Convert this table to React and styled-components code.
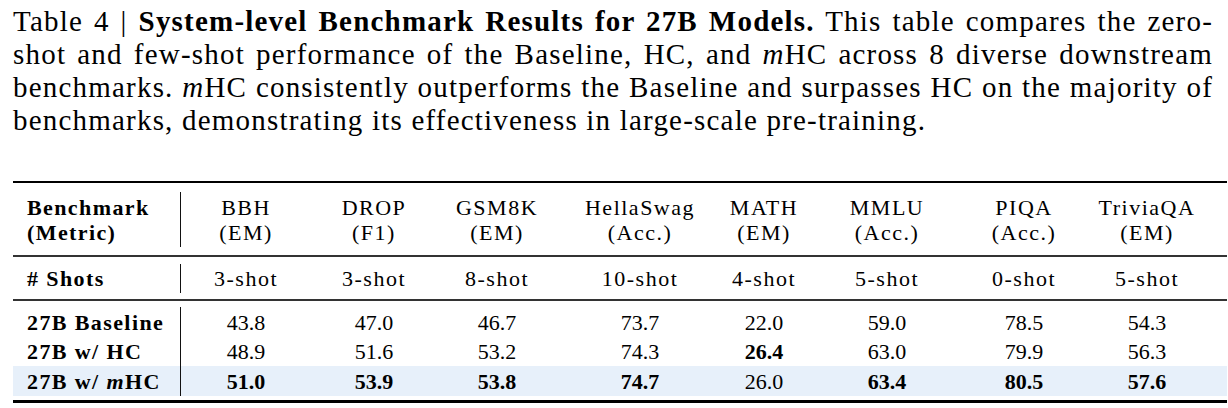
import React from 'react';
import styled, { createGlobalStyle } from 'styled-components';

const GlobalStyle = createGlobalStyle`
    html, body {
        margin: 0;
        padding: 0;
        background: #ffffff;
    }
    body {
        font-family: "Liberation Serif", "Times New Roman", serif;
        color: #000000;
    }
`;

const CELL_W = 112;

const Page = styled.div`
    width: 1228px;
    height: 408px;
    box-sizing: border-box;
    padding: 5px 1px 0 13px;
    overflow: hidden;
`;

const Caption = styled.div`
    width: 1200px;
    font-size: 29px;
    line-height: 33px;
    letter-spacing: 1.2px;
`;

const CaptionLine = styled.div`
    white-space: nowrap;
    text-align: ${(p) => (p.$last ? 'left' : 'justify')};
    text-align-last: ${(p) => (p.$last ? 'left' : 'justify')};
`;

const Strong = styled.b`
    font-weight: 700;
`;

const Em = styled.i`
    font-style: italic;
`;

const Table = styled.div`
    width: 1214px;
    margin-top: 44px;
    font-size: 22px;
`;

const Rule = styled.div`
    height: ${(p) => p.$size}px;
    background: ${(p) => p.$color || '#000'};
`;

const Section = styled.div`
    padding-top: ${(p) => p.$top}px;
    padding-bottom: ${(p) => p.$bottom}px;
`;

const Row = styled.div`
    display: flex;
    height: ${(p) => p.$h}px;
    background: ${(p) => (p.$highlight ? '#e7f0fa' : 'transparent')};
`;

const LabelCell = styled.div`
    flex: none;
    width: 168px;
    box-sizing: border-box;
    padding-left: 14px;
    border-right: 1px solid #111;
    display: flex;
    flex-direction: column;
    justify-content: center;
    font-weight: 700;
    letter-spacing: 1.4px;
    line-height: 25px;
    white-space: nowrap;
`;

const ValueCell = styled.div`
    flex: none;
    width: ${CELL_W}px;
    margin-left: ${(p) => p.$ml}px;
    display: flex;
    flex-direction: column;
    justify-content: center;
    text-align: center;
    white-space: nowrap;
    line-height: 25px;
    font-weight: ${(p) => (p.$bold ? 700 : 400)};
    letter-spacing: ${(p) => (p.$num ? 0 : 1.5)}px;
`;

const HeadRow = styled(Row)`
    padding-bottom: 3px;
    box-sizing: border-box;
`;

const COLS = [
    { name: 'BBH', metric: '(EM)', shots: '3-shot', c: 246 },
    { name: 'DROP', metric: '(F1)', shots: '3-shot', c: 374 },
    { name: 'GSM8K', metric: '(EM)', shots: '8-shot', c: 497 },
    { name: 'HellaSwag', metric: '(Acc.)', shots: '10-shot', c: 640 },
    { name: 'MATH', metric: '(EM)', shots: '4-shot', c: 764 },
    { name: 'MMLU', metric: '(Acc.)', shots: '5-shot', c: 887 },
    { name: 'PIQA', metric: '(Acc.)', shots: '0-shot', c: 1024 },
    { name: 'TriviaQA', metric: '(EM)', shots: '5-shot', c: 1147 },
];

// margin before each column so its text centres on c (table starts at x=13)
const margins = COLS.map((col, i) => {
    const left = col.c - 13 - CELL_W / 2;
    const prevRight = i === 0 ? 168 : COLS[i - 1].c - 13 + CELL_W / 2;
    return left - prevRight;
});

const ROWS = [
    {
        label: '27B Baseline',
        h: 30,
        values: ['43.8', '47.0', '46.7', '73.7', '22.0', '59.0', '78.5', '54.3'],
        bold: [],
    },
    {
        label: '27B w/ HC',
        h: 29,
        values: ['48.9', '51.6', '53.2', '74.3', '26.4', '63.0', '79.9', '56.3'],
        bold: [4],
    },
    {
        label: (
            <span>
                27B w/ <Em>m</Em>HC
            </span>
        ),
        h: 30,
        highlight: true,
        values: ['51.0', '53.9', '53.8', '74.7', '26.0', '63.4', '80.5', '57.6'],
        bold: [0, 1, 2, 3, 5, 6, 7],
    },
];

const App = () => {
    return (
        <Page>
            <GlobalStyle />
            <Caption>
                <CaptionLine>
                    Table 4 | <Strong>System-level Benchmark Results for 27B Models.</Strong> This table compares the zero-
                </CaptionLine>
                <CaptionLine>
                    shot and few-shot performance of the Baseline, HC, and <Em>m</Em>HC across 8 diverse downstream
                </CaptionLine>
                <CaptionLine>
                    benchmarks. <Em>m</Em>HC consistently outperforms the Baseline and surpasses HC on the majority of
                </CaptionLine>
                <CaptionLine $last>
                    benchmarks, demonstrating its effectiveness in large-scale pre-training.
                </CaptionLine>
            </Caption>

            <Table>
                <Rule $size={2} />
                <Section $top={9} $bottom={5}>
                    <HeadRow $h={58}>
                        <LabelCell>
                            <span>Benchmark</span>
                            <span>(Metric)</span>
                        </LabelCell>
                        {COLS.map((col, i) => (
                            <ValueCell key={col.name} $ml={margins[i]}>
                                <span>{col.name}</span>
                                <span>{col.metric}</span>
                            </ValueCell>
                        ))}
                    </HeadRow>
                </Section>
                <Rule $size={2} $color="#333" />
                <Section $top={7} $bottom={6}>
                    <Row $h={29}>
                        <LabelCell># Shots</LabelCell>
                        {COLS.map((col, i) => (
                            <ValueCell key={col.name} $ml={margins[i]}>
                                {col.shots}
                            </ValueCell>
                        ))}
                    </Row>
                </Section>
                <Rule $size={2} $color="#333" />
                <Section $top={6} $bottom={4}>
                    {ROWS.map((row, r) => (
                        <Row key={r} $h={row.h} $highlight={row.highlight}>
                            <LabelCell>{row.label}</LabelCell>
                            {row.values.map((v, i) => (
                                <ValueCell key={i} $ml={margins[i]} $num $bold={row.bold.includes(i)}>
                                    {v}
                                </ValueCell>
                            ))}
                        </Row>
                    ))}
                </Section>
                <Rule $size={3} />
            </Table>
        </Page>
    );
};

export default App;
